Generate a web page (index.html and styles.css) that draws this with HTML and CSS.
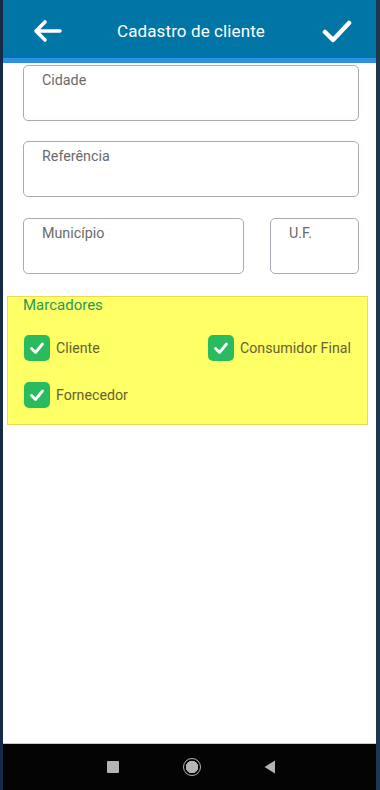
FILE: index.html
```html
<!DOCTYPE html>
<html lang="pt">
<head>
<meta charset="utf-8">
<link rel="stylesheet" href="styles.css">
</head>
<body>
<div class="phone">
  <header class="appbar">
    <svg class="icon back" viewBox="0 0 30 24" width="30" height="24">
      <path d="M28 12H4M13 3L4 12l9 9" fill="none" stroke="#fff" stroke-width="3.6" stroke-linecap="round" stroke-linejoin="round"/>
    </svg>
    <h1 class="title">Cadastro de cliente</h1>
    <svg class="icon ok" viewBox="0 0 30 24" width="30" height="24">
      <path d="M3 13l8 8L27 4" fill="none" stroke="#fff" stroke-width="4.5" stroke-linecap="round" stroke-linejoin="round"/>
    </svg>
  </header>
  <div class="stripe"></div>
  <main class="content">
    <div class="field"><span class="label">Cidade</span></div>
    <div class="field"><span class="label">Referência</span></div>
    <div class="row">
      <div class="field grow"><span class="label">Município</span></div>
      <div class="field uf"><span class="label">U.F.</span></div>
    </div>
    <section class="tags">
      <div class="tags-title">Marcadores</div>
      <div class="tags-grid">
        <label class="check"><span class="box"><svg viewBox="0 0 26 26" width="26" height="26"><path d="M7.5 13.5l4 4 7-8.5" fill="none" stroke="#fff" stroke-width="2.8" stroke-linecap="round" stroke-linejoin="round"/></svg></span>Cliente</label>
        <label class="check"><span class="box"><svg viewBox="0 0 26 26" width="26" height="26"><path d="M7.5 13.5l4 4 7-8.5" fill="none" stroke="#fff" stroke-width="2.8" stroke-linecap="round" stroke-linejoin="round"/></svg></span>Consumidor Final</label>
        <label class="check"><span class="box"><svg viewBox="0 0 26 26" width="26" height="26"><path d="M7.5 13.5l4 4 7-8.5" fill="none" stroke="#fff" stroke-width="2.8" stroke-linecap="round" stroke-linejoin="round"/></svg></span>Fornecedor</label>
      </div>
    </section>
  </main>
  <nav class="navbar">
    <span class="nav-square"></span>
    <span class="nav-home"></span>
    <svg class="nav-back" viewBox="0 0 12 14" width="12" height="14"><path d="M11 0.5V13.5L0.5 7Z" fill="#b4b4b4"/></svg>
  </nav>
</div>
</body>
</html>
```

FILE: styles.css
```css
* { box-sizing: border-box; }
html, body {
  margin: 0;
  padding: 0;
  background: #050608;
}
body {
  width: 380px;
  height: 790px;
  font-family: Roboto, "Noto Sans", "Liberation Sans", sans-serif;
}
.phone {
  width: 380px;
  height: 790px;
  display: flex;
  flex-direction: column;
  border-left: 3px solid #162a48;
  border-right: 4px solid #22354f;
  background: #ffffff;
}
.appbar {
  height: 58px;
  background: #0075a6;
  display: flex;
  align-items: center;
  justify-content: space-between;
  padding: 4px 24px 0 29px;
  flex: none;
}
.title {
  margin: 0;
  font-size: 17px;
  font-weight: 400;
  color: #ffffff;
  letter-spacing: 0.1px;
  padding-right: 2px;
}
.icon { display: block; }
.stripe {
  height: 5px;
  background: #2f8fe6;
  flex: none;
}
.content {
  flex: 1;
  background: #ffffff;
  display: flex;
  flex-direction: column;
  padding: 2px 17px 0 4px;
}
.field {
  height: 56px;
  border: 1.5px solid #a8abb6;
  border-radius: 5px;
  margin-left: 16px;
  margin-bottom: 20px;
  padding: 4px 0 0 18px;
}
.label {
  font-size: 14.3px;
  color: #6a6a6a;
}
.row {
  display: flex;
  gap: 26px;
  margin-top: 1px;
}
.row .field { margin-left: 0; }
.row .grow { flex: 1; margin-left: 16px; }
.uf { width: 89px; }
.tags {
  margin-top: 2px;
  background: #ffff66;
  border: 1px solid #f2d84c;
  height: 129px;
  width: 361px;
  padding: 0 0 0 15px;
}
.tags-title {
  font-size: 15px;
  color: #1f9a5d;
  line-height: 16px;
  margin-top: 0;
}
.tags-grid {
  margin-top: 22px;
  display: grid;
  grid-template-columns: 184px auto;
  row-gap: 21px;
}
.check {
  display: flex;
  align-items: center;
  gap: 6px;
  font-size: 14.2px;
  color: #66622f;
  height: 26px;
  padding-left: 1px;
}
.box {
  width: 26px;
  height: 26px;
  border-radius: 5px;
  background: #2abb5f;
  display: block;
}
.box svg { display: block; }
.navbar {
  height: 47px;
  background: #040404;
  border-top: 1px solid #c9c9c9;
  display: flex;
  align-items: center;
  padding-left: 104px;
  flex: none;
}
.nav-square {
  width: 12px;
  height: 12px;
  background: #b4b4b4;
  border-radius: 1px;
}
.nav-home {
  width: 18px;
  height: 18px;
  border-radius: 50%;
  border: 1.5px solid #b4b4b4;
  margin-left: 64px;
  background: radial-gradient(circle, #b4b4b4 0 6px, transparent 6.5px);
}
.nav-back {
  margin-left: 63px;
}
```
